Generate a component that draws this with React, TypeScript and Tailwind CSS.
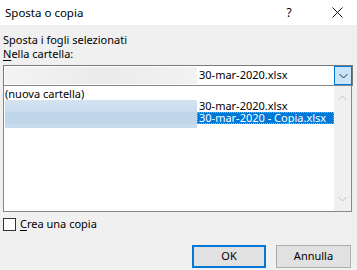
import React from "react";

const FONT = { fontFamily: '"Segoe UI", "Noto Sans", "Liberation Sans", sans-serif' };

function Chevron({ up, color }: { up?: boolean; color: string }) {
  return (
    <svg width="9" height="6" viewBox="0 0 9 6" className="block">
      <path
        d={up ? "M0.5 5 L4.5 1 L8.5 5" : "M0.5 1 L4.5 5 L8.5 1"}
        fill="none"
        stroke={color}
        strokeWidth="1"
      />
    </svg>
  );
}

export default function App() {
  return (
    <div className="w-[357px] h-[270px] bg-[#f0f0f0] text-[11px] text-black overflow-hidden whitespace-nowrap" style={FONT}>
      {/* Title bar */}
      <div className="h-[25px] bg-white flex items-center pl-[5px] pr-[14px]">
        <span className="flex-1 text-[11.5px]">Sposta o copia</span>
        <span className="w-[10px] text-center mr-[38px] text-[12px]">?</span>
        <svg width="11" height="11" viewBox="0 0 11 11">
          <path d="M0.5 0.5 L10.5 10.5 M10.5 0.5 L0.5 10.5" stroke="#111" strokeWidth="1" />
        </svg>
      </div>

      <div className="px-[3px] pt-[8px]">
        <div className="leading-[14px]">Sposta i fogli selezionati</div>
        <div className="leading-[14px]">
          <span className="underline underline-offset-2">N</span>ella cartella:
        </div>

        {/* Combo */}
        <div className="mt-[4px] w-[350px] h-[21px] bg-white border border-[#7a7a7a] flex items-center">
          <div className="w-[192px] h-[17px] ml-[1px] bg-gradient-to-r from-[#f3f3f3] via-[#ebebeb] to-[#f2f2f2]" />
          <span className="ml-[2px] flex-1">30-mar-2020.xlsx</span>
          <div className="w-[18px] h-[19px] bg-[#cce4f7] border border-[#0078d7] flex items-center justify-center">
            <Chevron color="#333" />
          </div>
        </div>

        {/* List */}
        <div className="-mt-[1px] w-[349px] h-[127px] bg-white border border-[#828790] flex">
          <div className="flex-1 pt-[2px] pl-[1px] leading-[12px]">
            <div className="h-[12px] flex items-center">(nuova cartella)</div>
            <div className="flex h-[12px]">
              <div className="w-[192px] bg-gradient-to-b from-[#d4e3f1] to-[#c9dcee]" />
              <div className="ml-[2px] h-[12px] flex items-center">30-mar-2020.xlsx</div>
            </div>
            <div className="flex h-[12px]">
              <div className="w-[192px] bg-[#c0d6eb]" />
              <div className="w-[137px] h-[12px] pl-[2px] flex items-center bg-[#0078d7] text-white outline outline-1 outline-dotted outline-[#ff9b2e] -outline-offset-1">
                30-mar-2020 - Copia.xlsx
              </div>
            </div>
            <div className="w-[192px] h-[4px] bg-[#c9dcee]" />
          </div>
          <div className="w-[17px] bg-[#f0f0f0] flex flex-col items-center justify-between py-[9px]">
            <Chevron up color="#c2c2c2" />
            <Chevron color="#c2c2c2" />
          </div>
        </div>

        {/* Checkbox */}
        <div className="mt-[6px] flex items-center h-[13px]">
          <div className="w-[13px] h-[13px] bg-white border border-[#333]" />
          <span className="ml-[4px]">
            <span className="underline underline-offset-2">C</span>rea una copia
          </span>
        </div>

        {/* Buttons */}
        <div className="mt-[14px] flex justify-end gap-[10px] pr-[3px]">
          <button className="w-[74px] h-[23px] bg-[#e1e1e1] border-2 border-[#0078d7] flex items-center justify-center">
            OK
          </button>
          <button className="w-[75px] h-[23px] bg-[#e1e1e1] border border-[#adadad] flex items-center justify-center">
            Annulla
          </button>
        </div>
      </div>
    </div>
  );
}
